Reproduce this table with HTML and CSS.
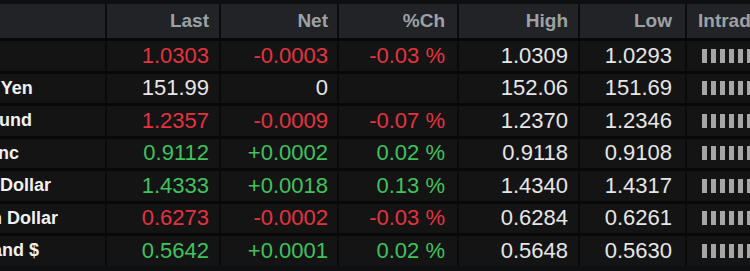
FILE: index.html
```html
<!DOCTYPE html>
<html>
<head>
<meta charset="utf-8">
<link rel="stylesheet" href="styles.css">
</head>
<body>
<div class="viewport">
  <div class="table">
    <div class="row head">
      <div class="c name"></div>
      <div class="c last">Last</div>
      <div class="c net">Net</div>
      <div class="c pct">%Ch</div>
      <div class="c high">High</div>
      <div class="c low">Low</div>
      <div class="c intra">Intraday</div>
    </div>
    <div class="row">
      <div class="c name">Euro</div>
      <div class="c last dn">1.0303</div>
      <div class="c net dn">-0.0003</div>
      <div class="c pct dn">-0.03 %</div>
      <div class="c high">1.0309</div>
      <div class="c low">1.0293</div>
      <div class="c intra"><span class="bars"><i></i><i></i><i></i><i></i><i></i><i></i><i></i><i></i><i></i></span></div>
    </div>
    <div class="row">
      <div class="c name">Japanese Yen</div>
      <div class="c last">151.99</div>
      <div class="c net">0</div>
      <div class="c pct"></div>
      <div class="c high">152.06</div>
      <div class="c low">151.69</div>
      <div class="c intra"><span class="bars"><i></i><i></i><i></i><i></i><i></i><i></i><i></i><i></i><i></i></span></div>
    </div>
    <div class="row">
      <div class="c name">British Pound</div>
      <div class="c last dn">1.2357</div>
      <div class="c net dn">-0.0009</div>
      <div class="c pct dn">-0.07 %</div>
      <div class="c high">1.2370</div>
      <div class="c low">1.2346</div>
      <div class="c intra"><span class="bars"><i></i><i></i><i></i><i></i><i></i><i></i><i></i><i></i><i></i></span></div>
    </div>
    <div class="row">
      <div class="c name">Swiss Franc</div>
      <div class="c last up">0.9112</div>
      <div class="c net up">+0.0002</div>
      <div class="c pct up">0.02 %</div>
      <div class="c high">0.9118</div>
      <div class="c low">0.9108</div>
      <div class="c intra"><span class="bars"><i></i><i></i><i></i><i></i><i></i><i></i><i></i><i></i><i></i></span></div>
    </div>
    <div class="row">
      <div class="c name">Canadian Dollar</div>
      <div class="c last up">1.4333</div>
      <div class="c net up">+0.0018</div>
      <div class="c pct up">0.13 %</div>
      <div class="c high">1.4340</div>
      <div class="c low">1.4317</div>
      <div class="c intra"><span class="bars"><i></i><i></i><i></i><i></i><i></i><i></i><i></i><i></i><i></i></span></div>
    </div>
    <div class="row">
      <div class="c name">Australian Dollar</div>
      <div class="c last dn">0.6273</div>
      <div class="c net dn">-0.0002</div>
      <div class="c pct dn">-0.03 %</div>
      <div class="c high">0.6284</div>
      <div class="c low">0.6261</div>
      <div class="c intra"><span class="bars"><i></i><i></i><i></i><i></i><i></i><i></i><i></i><i></i><i></i></span></div>
    </div>
    <div class="row">
      <div class="c name">New Zealand $</div>
      <div class="c last up">0.5642</div>
      <div class="c net up">+0.0001</div>
      <div class="c pct up">0.02 %</div>
      <div class="c high">0.5648</div>
      <div class="c low">0.5630</div>
      <div class="c intra"><span class="bars"><i></i><i></i><i></i><i></i><i></i><i></i><i></i><i></i><i></i></span></div>
    </div>
  </div>
</div>
</body>
</html>
```

FILE: styles.css
```css
html, body {
  margin: 0;
  padding: 0;
  background: #0e0f11;
}
.viewport {
  width: 750px;
  height: 271px;
  overflow: hidden;
  padding-top: 4px;
  box-sizing: border-box;
  background: #0e0f11;
  font-family: "Liberation Sans", Arial, sans-serif;
}
.table {
  margin-left: -86px;
  width: 1000px;
}
.row {
  display: grid;
  grid-template-columns: 191px 114px 118px 120px 121px 107px 150px;
  height: 32.5px;
  box-sizing: border-box;
  border-top: 3px solid #080808;
  background: #141415;
  color: #e6e6e6;
  font-size: 22px;
}
.row.head {
  height: 34px;
  border-top: 0;
  background: #212327;
  color: #9da1a6;
  font-size: 19px;
  font-weight: bold;
}
.c {
  display: flex;
  align-items: center;
  justify-content: flex-end;
  padding-right: 10px;
  white-space: nowrap;
  overflow: hidden;
  border-left: 2px solid #0a0a0a;
}
.row.head .c {
  border-left-color: #0b0c0e;
}
.c.name {
  justify-content: flex-start;
  border-left: 0;
  font-size: 18px;
  font-weight: bold;
  color: #f0f0f0;
}
.c.net { padding-right: 9px; }
.c.pct { padding-right: 12px; }
.c.low { padding-right: 13px; }
.c.intra {
  justify-content: flex-start;
  padding-left: 11px;
  padding-right: 0;
}
.dn { color: #e4333f; }
.up { color: #3fc35c; }
.bars {
  display: flex;
  gap: 4px;
  margin-left: 4px;
}
.bars i {
  display: block;
  width: 5px;
  height: 14px;
  background: #a6a6a6;
}
```
